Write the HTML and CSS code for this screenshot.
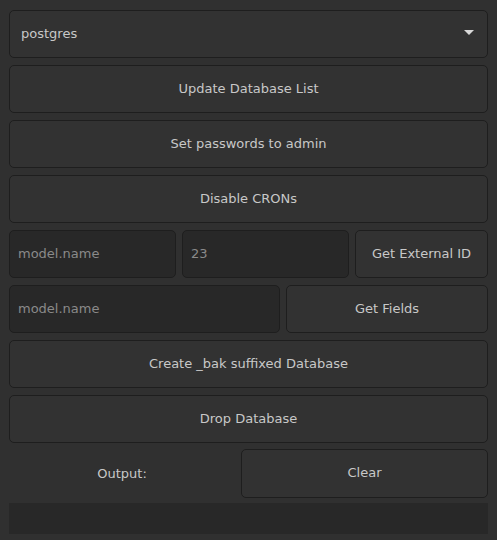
FILE: index.html
```html
<!DOCTYPE html>
<html>
<head>
<meta charset="utf-8">
<link rel="stylesheet" href="styles.css">
</head>
<body>
<div class="panel">
  <div class="select">
    <span>postgres</span>
    <svg class="caret" width="10" height="6" viewBox="0 0 10 6"><path d="M0 0 H10 L5 5 Z" fill="#d8d8d8"/></svg>
  </div>
  <button class="btn">Update Database List</button>
  <button class="btn">Set passwords to admin</button>
  <button class="btn">Disable CRONs</button>
  <div class="row row-ext">
    <div class="input placeholder">model.name</div>
    <div class="input placeholder">23</div>
    <button class="btn">Get External ID</button>
  </div>
  <div class="row row-fields">
    <div class="input placeholder">model.name</div>
    <button class="btn">Get Fields</button>
  </div>
  <button class="btn">Create _bak suffixed Database</button>
  <button class="btn">Drop Database</button>
  <div class="row row-out">
    <div class="label">Output:</div>
    <button class="btn">Clear</button>
  </div>
  <div class="output"></div>
</div>
</body>
</html>
```

FILE: styles.css
```css
html, body {
  margin: 0;
  padding: 0;
  background: #303030;
  height: 100%;
  overflow: hidden;
}
body {
  font-family: "DejaVu Sans", sans-serif;
  font-size: 13px;
  color: #c8c8c8;
}
.panel {
  display: flex;
  flex-direction: column;
  gap: 7px;
  padding: 10px 9px 0 9px;
}
.select, .btn, .input {
  box-sizing: border-box;
  height: 48px;
  border: 1px solid #1e1e1e;
  border-radius: 5px;
}
.select {
  background: #323232;
  display: flex;
  align-items: center;
  justify-content: space-between;
  padding: 0 13px 2px 11px;
}
.btn {
  background: #323232;
  color: #c8c8c8;
  font: inherit;
  width: 100%;
  display: flex;
  align-items: center;
  justify-content: center;
  padding: 0 0 1px;
}
.row {
  display: grid;
  gap: 6px;
}
.row-ext {
  grid-template-columns: 167px 167px 1fr;
}
.row-fields {
  grid-template-columns: 271px 1fr;
}
.input {
  background: #282828;
  display: flex;
  align-items: center;
  padding: 0 8px 1px;
}
.placeholder {
  color: #8a8a8a;
}
.row-out {
  grid-template-columns: 226px 1fr;
  margin-top: -1px;
}
.row-out .btn {
  height: 49px;
  padding-bottom: 3px;
}
.label {
  display: flex;
  align-items: center;
  justify-content: center;
  color: #c8c8c8;
  padding-bottom: 1px;
}
.output {
  margin-top: -2px;
  height: 31px;
  background: #282828;
}
```
